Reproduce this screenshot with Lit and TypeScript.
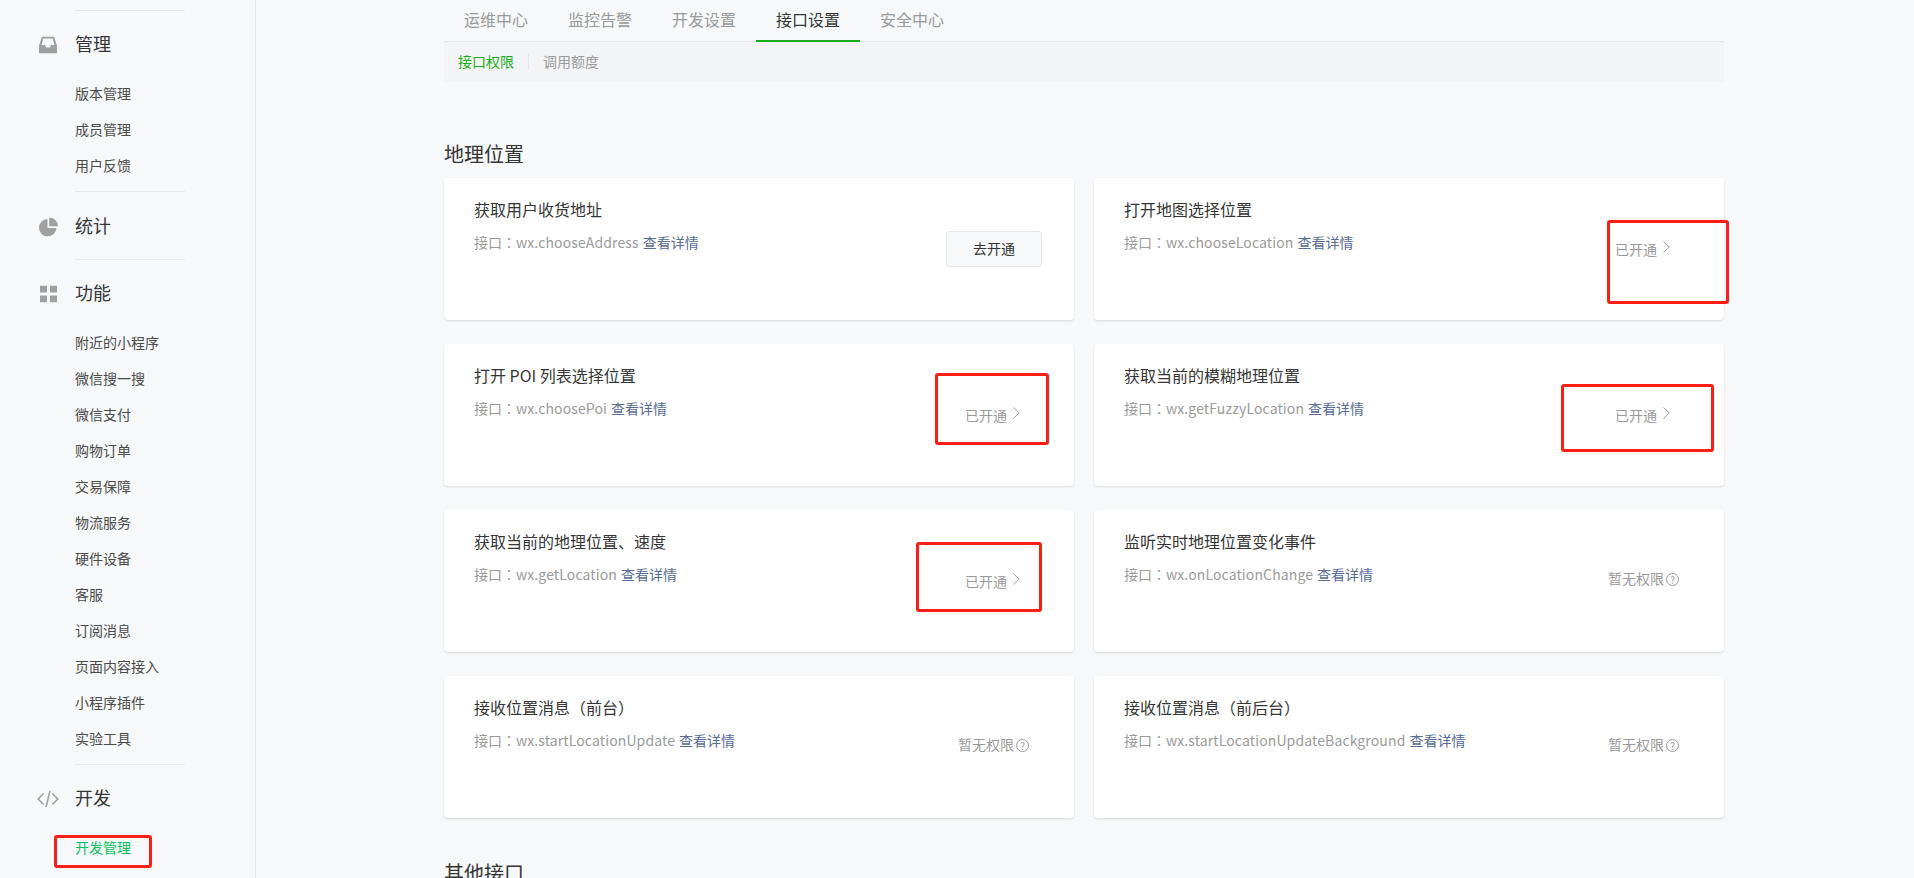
import { LitElement, html, css, svg } from "lit";
import { customElement } from "lit/decorators.js";

type Status = "open" | "enabled" | "none";
interface Api { title: string; api: string; status: Status }

const APIS: Api[] = [
  { title: "获取用户收货地址", api: "wx.chooseAddress", status: "open" },
  { title: "打开地图选择位置", api: "wx.chooseLocation", status: "enabled" },
  { title: "打开 POI 列表选择位置", api: "wx.choosePoi", status: "enabled" },
  { title: "获取当前的模糊地理位置", api: "wx.getFuzzyLocation", status: "enabled" },
  { title: "获取当前的地理位置、速度", api: "wx.getLocation", status: "enabled" },
  { title: "监听实时地理位置变化事件", api: "wx.onLocationChange", status: "none" },
  { title: "接收位置消息（前台）", api: "wx.startLocationUpdate", status: "none" },
  { title: "接收位置消息（前后台）", api: "wx.startLocationUpdateBackground", status: "none" },
];

const MARKS = [
  [54, 835, 98, 33],
  [1607, 220, 122, 84],
  [935, 373, 114, 72],
  [1561, 384, 153, 68],
  [916, 542, 126, 70],
];

const ICONS = {
  inbox: svg`<svg width="18" height="17" viewBox="0 0 18 17"><path fill="#a0a0a0" fill-rule="evenodd" d="M3 0H15L18 9V17H0V9ZM4.4 2L2.5 8.5H6L7 11H11L12 8.5H15.5L13.6 2Z"/></svg>`,
  pie: svg`<svg width="19" height="19" viewBox="0 0 19 19"><path fill="#a0a0a0" d="M8.5 1.6A8.7 8.7 0 1 0 17.4 10.5H8.5Z"/><path fill="#a0a0a0" d="M10.2 0A8.8 8.8 0 0 1 19 8.8H10.2Z"/></svg>`,
  grid: svg`<svg width="17" height="17" viewBox="0 0 17 17"><g fill="#a0a0a0"><rect width="7" height="7"/><rect x="10" width="7" height="7"/><rect y="10" width="7" height="7"/><rect x="10" y="10" width="7" height="7"/></g></svg>`,
  code: svg`<svg width="22" height="17" viewBox="0 0 22 17"><path fill="none" stroke="#a0a0a0" stroke-width="1.6" d="M6.6 3L1.2 8.5L6.6 14M15.4 3L20.8 8.5L15.4 14M13 .4L9 16.6"/></svg>`,
};

@customElement("app-root")
export class AppRoot extends LitElement {
  static styles = css`
    :host {
      display: flex;
      position: relative;
      height: 878px;
      overflow: hidden;
      background: #f6f8f9;
      font-family: "Noto Sans CJK SC", "Noto Sans", sans-serif;
      color: #353535;
    }
    .side {
      flex: none;
      box-sizing: border-box;
      width: 256px;
      padding: 10px 0 0 75px;
      border-right: 1px solid #e7e7eb;
    }
    .sec {
      width: 110px;
      border-top: 1px solid #e7e7eb;
      padding-bottom: 7px;
    }
    .sec.plain { padding-bottom: 2px; }
    .head {
      position: relative;
      display: flex;
      align-items: center;
      height: 64px;
      padding-bottom: 1px;
      font-size: 18px;
      color: #353535;
    }
    .plain .head { padding: 1px 0 0; height: 64px; }
    .ico {
      position: absolute;
      left: -36px;
      top: calc(50% + 1px);
      display: flex;
      transform: translateY(-50%);
    }
    .plain .ico { top: calc(50% + 2px); }
    .sec:nth-child(3) .ico { left: -35px; }
    .sec:nth-child(4) .ico { left: -38px; }
    .item {
      height: 36px;
      line-height: 34px;
      font-size: 14px;
      white-space: nowrap;
      color: #4a4a4a;
    }
    .item.on { color: #07c160; }
    .main {
      flex: none;
      width: 1280px;
      margin-left: 188px;
    }
    .tabs {
      display: flex;
      height: 42px;
      box-shadow: inset 0 -1px 0 #e7e7eb;
    }
    .tab {
      box-sizing: border-box;
      width: 104px;
      height: 42px;
      line-height: 38px;
      text-align: center;
      font-size: 16px;
      color: #9a9a9a;
      border-bottom: 2px solid transparent;
    }
    .tab.on { color: #353535; border-bottom-color: #1aad19; }
    .sub {
      display: flex;
      align-items: center;
      height: 40px;
      padding-left: 14px;
      background: #f3f4f6;
      font-size: 14px;
      color: #9a9a9a;
    }
    .sub span {
      line-height: 14px;
      padding-bottom: 2px;
    }
    .sub span:first-child {
      color: #1aad19;
      padding-right: 14px;
      margin-right: 14px;
      border-right: 1px solid #e4e6e9;
    }
    h2 {
      margin: 58px 0 10px;
      font-size: 20px;
      font-weight: 400;
      line-height: 28px;
      color: #353535;
    }
    h2.next { margin-top: 41px; }
    .grid {
      display: grid;
      grid-template-columns: 630px 630px;
      grid-auto-rows: 142px;
      gap: 24px 20px;
    }
    .card {
      display: flex;
      justify-content: space-between;
      align-items: flex-start;
      padding-left: 30px;
      background: #fff;
      border-radius: 4px;
      box-shadow: 0 1px 2px rgba(150, 150, 150, 0.3);
    }
    .title {
      margin-top: 19px;
      font-size: 16px;
      line-height: 24px;
      color: #353535;
    }
    .desc {
      margin-top: 11px;
      font-size: 14px;
      line-height: 20px;
      color: #9a9a9a;
    }
    .label { font-family: "Noto Sans CJK TC", "Noto Sans CJK SC", sans-serif; }
    .name { letter-spacing: 0.12px; }
    .desc a { color: #576b95; margin-left: 4px; }
    .btn {
      box-sizing: border-box;
      width: 96px;
      height: 36px;
      margin: 53px 32px 0 0;
      line-height: 32px;
      text-align: center;
      font-size: 14px;
      color: #353535;
      background: #f6f8f9;
      border: 1px solid #e4e8eb;
      border-radius: 3px;
    }
    .state {
      display: flex;
      align-items: center;
      font-size: 14px;
      line-height: 20px;
      color: #9a9a9a;
    }
    .state.enabled { margin: 61px 54px 0 0; gap: 6px; }
    .state.none { margin: 58px 45px 0 0; gap: 2px; }
    .chev { display: flex; margin-bottom: 5px; }
    .q {
      box-sizing: border-box;
      width: 13px;
      height: 13px;
      margin-top: 2px;
      border: 1px solid #9a9a9a;
      border-radius: 50%;
      font-size: 10px;
      line-height: 11px;
      text-align: center;
    }
    .mark {
      position: absolute;
      box-sizing: border-box;
      border: 3px solid #fb1e14;
      border-radius: 3px;
    }
  `;

  private sec(icon: unknown, name: string, items: string[], active = "") {
    return html`<div class="sec ${items.length ? "" : "plain"}">
      <div class="head"><span class="ico">${icon}</span>${name}</div>
      ${items.map((i) => html`<div class="item ${i === active ? "on" : ""}">${i}</div>`)}
    </div>`;
  }

  private action(s: Status) {
    if (s === "open") return html`<div class="btn">去开通</div>`;
    if (s === "enabled")
      return html`<div class="state enabled">已开通<span class="chev"><svg width="7" height="12" viewBox="0 0 7 12"><path fill="none" stroke="#a0a0a0" d="M.5.5L6.2 6L.5 11.5"/></svg></span></div>`;
    return html`<div class="state none">暂无权限<span class="q">?</span></div>`;
  }

  render() {
    return html`
      <aside class="side">
        ${this.sec(ICONS.inbox, "管理", ["版本管理", "成员管理", "用户反馈"])}
        ${this.sec(ICONS.pie, "统计", [])}
        ${this.sec(ICONS.grid, "功能", ["附近的小程序", "微信搜一搜", "微信支付", "购物订单", "交易保障", "物流服务", "硬件设备", "客服", "订阅消息", "页面内容接入", "小程序插件", "实验工具"])}
        ${this.sec(ICONS.code, "开发", ["开发管理"], "开发管理")}
      </aside>
      <main class="main">
        <nav class="tabs">
          ${["运维中心", "监控告警", "开发设置", "接口设置", "安全中心"].map(
            (t) => html`<div class="tab ${t === "接口设置" ? "on" : ""}">${t}</div>`
          )}
        </nav>
        <div class="sub"><span>接口权限</span><span>调用额度</span></div>
        <h2>地理位置</h2>
        <section class="grid">
          ${APIS.map(
            (a) => html`<article class="card">
              <div>
                <div class="title">${a.title}</div>
                <div class="desc"><span class="label">接口：</span><span class="name">${a.api}</span><a>查看详情</a></div>
              </div>
              ${this.action(a.status)}
            </article>`
          )}
        </section>
        <h2 class="next">其他接口</h2>
      </main>
      ${MARKS.map(
        ([x, y, w, h]) =>
          html`<div class="mark" style="left:${x}px;top:${y}px;width:${w}px;height:${h}px"></div>`
      )}
    `;
  }
}
